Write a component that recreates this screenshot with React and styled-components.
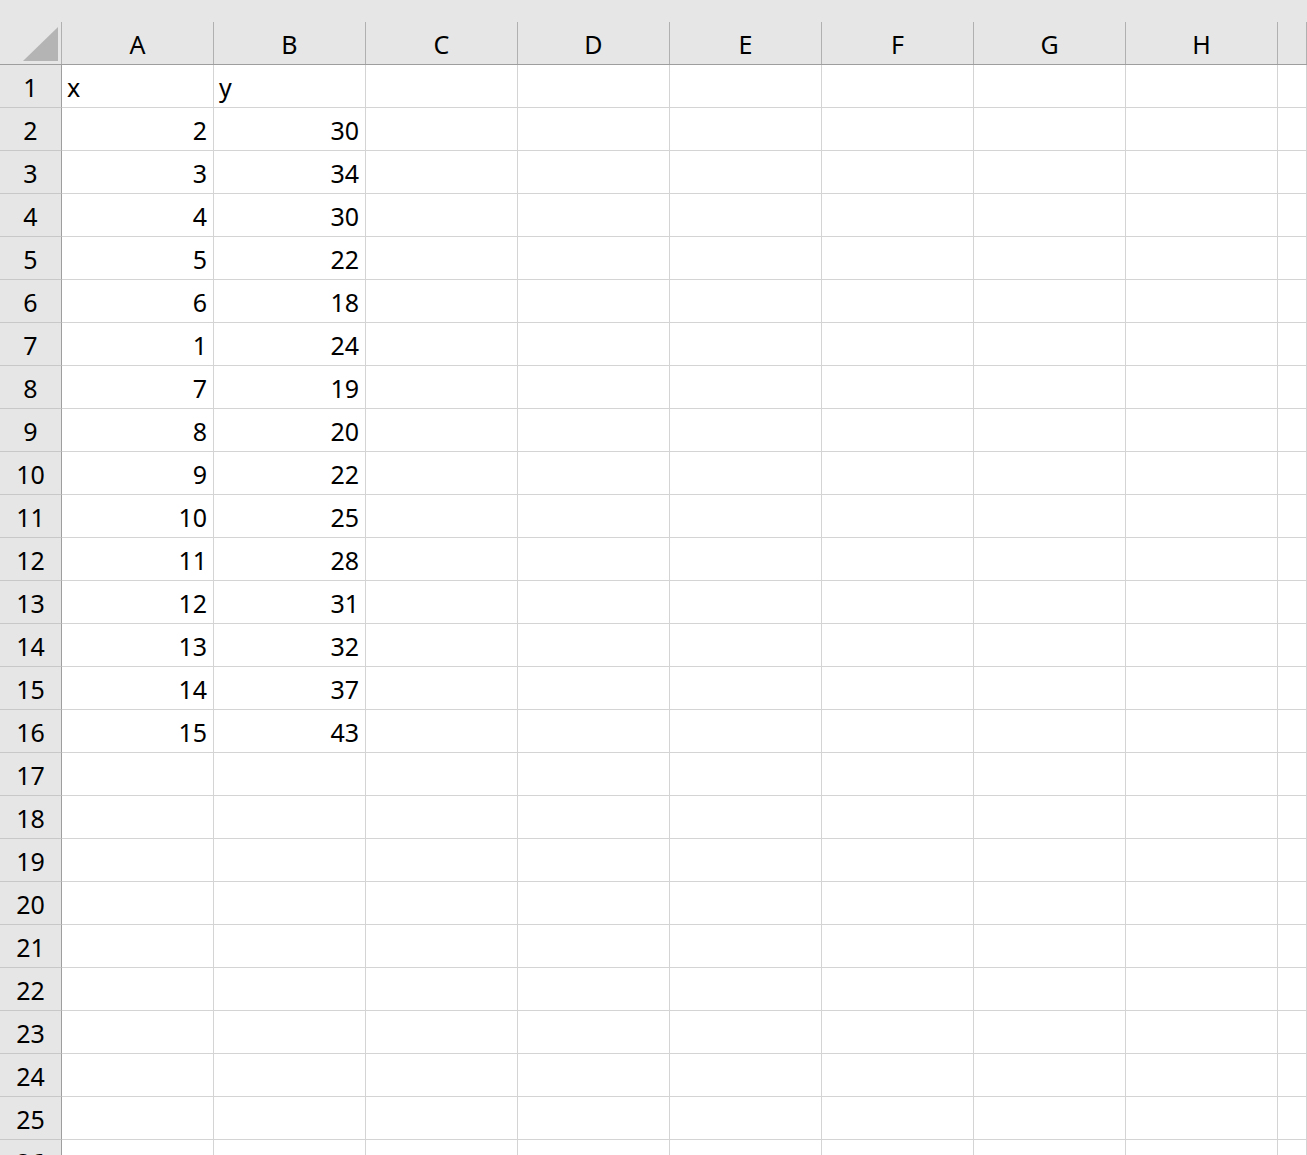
import React from 'react';
import styled, { createGlobalStyle } from 'styled-components';

const GlobalStyle = createGlobalStyle`
  html, body {
    margin: 0;
    padding: 0;
    background: #fff;
    overflow: hidden;
  }
  body {
    font-family: "Noto Sans", "Open Sans", sans-serif;
  }
`;

const COLUMNS = ['A', 'B', 'C', 'D', 'E', 'F', 'G', 'H', ''];
const ROW_COUNT = 26;

// sheet contents, keyed by row number
const DATA = {
  1: ['x', 'y'],
  2: [2, 30],
  3: [3, 34],
  4: [4, 30],
  5: [5, 22],
  6: [6, 18],
  7: [1, 24],
  8: [7, 19],
  9: [8, 20],
  10: [9, 22],
  11: [10, 25],
  12: [11, 28],
  13: [12, 31],
  14: [13, 32],
  15: [14, 37],
  16: [15, 43],
};

const Sheet = styled.div`
  display: grid;
  grid-template-columns: 62px repeat(8, 152px) 1fr;
  grid-template-rows: 65px;
  grid-auto-rows: 43px;
  width: 1307px;
  height: 1155px;
  overflow: hidden;
  font-size: 25px;
  color: #000;
`;

const Corner = styled.div`
  background: #e6e6e6;
  border-bottom: 1px solid #9e9e9e;

  & > svg {
    display: block;
  }
`;

const ColumnHeader = styled.div`
  background: #e6e6e6;
  border-bottom: 1px solid #9e9e9e;
  padding-top: 22px;
  box-sizing: border-box;
`;

const ColumnLabel = styled.div`
  height: 100%;
  box-sizing: border-box;
  border-right: 1px solid #b0b0b0;
  padding-top: 2px;
  line-height: 40px;
  text-align: center;
`;

const RowHeader = styled.div`
  background: #e6e6e6;
  border-right: 1px solid #9e9e9e;
  border-bottom: 1px solid #c8c8c8;
  box-sizing: border-box;
  padding-top: 2px;
  line-height: 40px;
  text-align: center;
`;

const Cell = styled.div`
  border-right: 1px solid #d4d4d4;
  border-bottom: 1px solid #d4d4d4;
  box-sizing: border-box;
  padding: 2px 6px 0 5px;
  line-height: 40px;
  white-space: nowrap;
  overflow: hidden;
  text-align: ${({ $numeric }) => ($numeric ? 'right' : 'left')};
`;

const SelectAll = () => (
  <svg width="62" height="64" viewBox="0 0 62 64">
    <polygon points="58,27 58,61 23,61" fill="#b4b4b4" />
    <line x1="61.5" y1="22" x2="61.5" y2="64" stroke="#b0b0b0" strokeWidth="1" />
  </svg>
);

const App = () => {
  const rows = Array.from({ length: ROW_COUNT }, (_, i) => i + 1);

  return (
    <>
      <GlobalStyle />
      <Sheet>
        <Corner>
          <SelectAll />
        </Corner>
        {COLUMNS.map((col, i) => (
          <ColumnHeader key={`h${i}`}>
            <ColumnLabel>{col}</ColumnLabel>
          </ColumnHeader>
        ))}

        {rows.map((row) => (
          <React.Fragment key={row}>
            <RowHeader>{row}</RowHeader>
            {COLUMNS.map((_, c) => {
              const value = DATA[row] ? DATA[row][c] : undefined;
              return (
                <Cell key={c} $numeric={typeof value === 'number'}>
                  {value}
                </Cell>
              );
            })}
          </React.Fragment>
        ))}
      </Sheet>
    </>
  );
};

export default App;
